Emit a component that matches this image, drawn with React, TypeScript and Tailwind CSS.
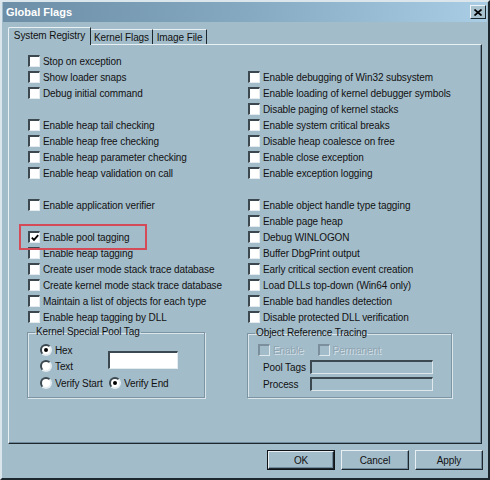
import React from "react";

const LEFT: (string | null)[] = [
  "Stop on exception",
  "Show loader snaps",
  "Debug initial command",
  null,
  "Enable heap tail checking",
  "Enable heap free checking",
  "Enable heap parameter checking",
  "Enable heap validation on call",
  null,
  "Enable application verifier",
  null,
  "Enable pool tagging",
  "Enable heap tagging",
  "Create user mode stack trace database",
  "Create kernel mode stack trace database",
  "Maintain a list of objects for each type",
  "Enable heap tagging by DLL",
];

const RIGHT: (string | null)[] = [
  null,
  "Enable debugging of Win32 subsystem",
  "Enable loading of kernel debugger symbols",
  "Disable paging of kernel stacks",
  "Enable system critical breaks",
  "Disable heap coalesce on free",
  "Enable close exception",
  "Enable exception logging",
  null,
  "Enable object handle type tagging",
  "Enable page heap",
  "Debug WINLOGON",
  "Buffer DbgPrint output",
  "Early critical section event creation",
  "Load DLLs top-down (Win64 only)",
  "Enable bad handles detection",
  "Disable protected DLL verification",
];

function Box({ checked = false, disabled = false }: { checked?: boolean; disabled?: boolean }) {
  return (
    <span
      className={
        "w-[12px] h-[12px] shrink-0 flex items-center justify-center border-t-2 border-l-2 border-b border-r " +
        (disabled
          ? "bg-[#a3bcca] border-t-[#7b909c] border-l-[#7b909c] border-b-[#dfe8ed] border-r-[#dfe8ed]"
          : "bg-white border-t-[#3c4850] border-l-[#3c4850] border-b-[#e4ecf0] border-r-[#e4ecf0]")
      }
    >
      {checked && (
        <svg width="8" height="8" viewBox="0 0 8 8">
          <path d="M0.8 3.6 L3 5.9 L7.2 1.2" stroke="#000" strokeWidth="1.8" fill="none" />
        </svg>
      )}
    </span>
  );
}

function Check({ label, checked = false }: { label: string; checked?: boolean }) {
  return (
    <div className="flex items-center gap-[3px] h-[16px] whitespace-nowrap">
      <Box checked={checked} />
      <span>{label}</span>
    </div>
  );
}

function Radio({ label, checked = false }: { label: string; checked?: boolean }) {
  return (
    <div className="flex items-center gap-[3px] h-[16px] whitespace-nowrap">
      <span className="w-[12px] h-[12px] shrink-0 rounded-full bg-white border-2 border-t-[#3c4850] border-l-[#3c4850] border-b-[#e4ecf0] border-r-[#e4ecf0] flex items-center justify-center">
        {checked && <span className="w-[4px] h-[4px] rounded-full bg-black" />}
      </span>
      <span>{label}</span>
    </div>
  );
}

function Button({ label, isDefault = false }: { label: string; isDefault?: boolean }) {
  return (
    <div
      className={
        "w-[68px] h-[20px] flex items-center justify-center " +
        (isDefault ? "border border-[#101418]" : "")
      }
    >
      <div className="w-full h-full flex items-center justify-center border-t border-l border-t-[#e8f0f4] border-l-[#e8f0f4] border-b border-r border-b-[#1d272e] border-r-[#1d272e] shadow-[inset_-1px_-1px_0_#71899a] bg-[#a3bcca]">
        {label}
      </div>
    </div>
  );
}

export default function App() {
  return (
    <div
      className="relative w-[490px] h-[480px] bg-[#a3bcca] border-t-2 border-l-2 border-t-[#dbe6ec] border-l-[#dbe6ec] border-r-2 border-b-2 border-r-[#1c262d] border-b-[#1c262d] flex flex-col text-[10px] text-[#111] tracking-[-0.1px] overflow-hidden"
      style={{ fontFamily: '"Liberation Sans", Arial, sans-serif' }}
    >
      {/* Title bar */}
      <div className="h-[20px] mx-[1px] flex items-center justify-between pl-[3px] pr-[1px] bg-gradient-to-r from-[#6c8ea7] via-[#86a9c2] to-[#aacde6]">
        <span className="text-white font-bold text-[11px] tracking-normal">Global Flags</span>
        <div className="w-[16px] h-[14px] flex items-center justify-center bg-[#a9c2cf] border-t border-l border-t-[#eef4f7] border-l-[#eef4f7] border-b border-r border-b-[#1c262d] border-r-[#1c262d]">
          <svg width="8" height="7" viewBox="0 0 8 7">
            <path d="M0.5 0.5 L7.5 6.5 M7.5 0.5 L0.5 6.5" stroke="#000" strokeWidth="1.7" />
          </svg>
        </div>
      </div>

      {/* Tabs */}
      <div className="mt-[5px] ml-[6px] h-[17px] flex items-end relative z-10">
        <div className="h-[18px] -mb-[1px] w-[83px] flex items-center justify-center bg-[#a3bcca] border-t border-l border-t-[#e8f0f4] border-l-[#e8f0f4] border-r border-r-[#1d272e] rounded-tl-[2px]">
          <span className="-mt-[2px]">System Registry</span>
        </div>
        <div className="h-[15px] w-[62px] flex items-center justify-center border-t border-t-[#e8f0f4] border-r border-r-[#1d272e]">
          <span>Kernel Flags</span>
        </div>
        <div className="h-[15px] w-[54px] flex items-center justify-center border-t border-t-[#e8f0f4] border-r border-r-[#1d272e]">
          <span>Image File</span>
        </div>
      </div>

      {/* Panel */}
      <div className="ml-[6px] w-[474px] h-[400px] border-t border-l border-t-[#e8f0f4] border-l-[#e8f0f4] border-r border-b border-r-[#1d272e] border-b-[#1d272e] shadow-[inset_-1px_-1px_0_#71899a] flex flex-col">
        <div className="pt-[8px] pl-[19px] grid grid-cols-[220px_1fr]">
          {LEFT.map((l, i) => (
            <React.Fragment key={i}>
              <div className="h-[16px]">{l ? <Check label={l} checked={l === "Enable pool tagging"} /> : null}</div>
              <div className="h-[16px]">{RIGHT[i] ? <Check label={RIGHT[i] as string} /> : null}</div>
            </React.Fragment>
          ))}
        </div>

        <div className="flex items-start ml-[18px] mt-[1px] gap-[42px]">
          {/* Kernel Special Pool Tag */}
          <fieldset className="w-[178px] h-[72px] border border-[#7d95a3] shadow-[inset_1px_1px_0_#dbe6ec,1px_1px_0_#dbe6ec]">
            <legend className="ml-[7px] px-[1px] leading-[12px]">Kernel Special Pool Tag</legend>
            <div className="pl-[12px] pt-[4px] grid grid-cols-[69px_1fr]">
              <Radio label="Hex" checked />
              <div className="row-span-2 mt-[9px] -ml-[1px] w-[70px] h-[18px] bg-white border-t-2 border-l-2 border-t-[#3c4850] border-l-[#3c4850] border-b border-r border-b-[#e4ecf0] border-r-[#e4ecf0]" />
              <Radio label="Text" />
              <div className="mt-[1px]">
                <Radio label="Verify Start" />
              </div>
              <div className="mt-[1px]">
                <Radio label="Verify End" checked />
              </div>
            </div>
          </fieldset>

          {/* Object Reference Tracing */}
          <fieldset className="w-[205px] h-[71px] mt-[1px] border border-[#7d95a3] shadow-[inset_1px_1px_0_#dbe6ec,1px_1px_0_#dbe6ec]">
            <legend className="ml-[7px] px-[1px] leading-[12px]">Object Reference Tracing</legend>
            <div className="pl-[10px] pt-[3px]">
              <div className="flex items-center h-[16px] gap-[14px]">
                <div className="flex items-center gap-[3px] text-[#8ea4b1] [text-shadow:1px_1px_0_#d6e2e8]">
                  <Box disabled />
                  <span>Enable</span>
                </div>
                <div className="flex items-center gap-[3px] text-[#8ea4b1] [text-shadow:1px_1px_0_#d6e2e8]">
                  <Box disabled />
                  <span>Permanent</span>
                </div>
              </div>
              <div className="flex items-center h-[14px] mt-[2px] pl-[5px]">
                <span className="w-[47px]">Pool Tags</span>
                <div className="w-[123px] h-[14px] border-t-2 border-l-2 border-t-[#3c4850] border-l-[#3c4850] border-b border-r border-b-[#dfe8ed] border-r-[#dfe8ed]" />
              </div>
              <div className="flex items-center h-[14px] mt-[3px] pl-[5px]">
                <span className="w-[47px]">Process</span>
                <div className="w-[123px] h-[14px] border-t-2 border-l-2 border-t-[#3c4850] border-l-[#3c4850] border-b border-r border-b-[#dfe8ed] border-r-[#dfe8ed]" />
              </div>
            </div>
          </fieldset>
        </div>
      </div>

      {/* Buttons */}
      <div className="mt-[6px] flex justify-end gap-[6px] pr-[5px]">
        <Button label="OK" isDefault />
        <Button label="Cancel" />
        <Button label="Apply" />
      </div>

      {/* Red highlight annotation */}
      <div className="absolute left-[17px] top-[222px] w-[128px] h-[26px] border-2 border-[#d44a57] pointer-events-none" />
    </div>
  );
}
